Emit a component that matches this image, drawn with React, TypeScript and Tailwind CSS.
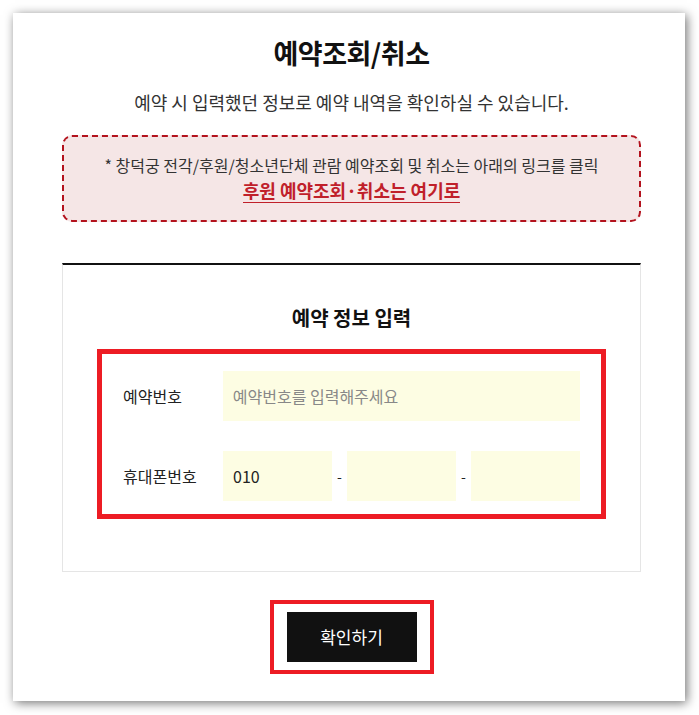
const font = { fontFamily: '"Noto Sans CJK KR", "Noto Sans", sans-serif' };

export default function App() {
  return (
    <div className="min-h-[715px] bg-white pt-[13px] pl-[13px]" style={font}>
      <div className="flex h-[688px] w-[672px] flex-col bg-white pl-[49px] pr-[44px] shadow-[2px_2px_10px_rgba(0,0,0,0.55)]">
        <h1 className="mt-[21px] text-center text-[27px] font-bold leading-[38px] tracking-[-0.5px] text-[#111]">
          예약조회/취소
        </h1>
        <p className="mt-[17px] text-center text-[18px] leading-[26px] text-[#333]">
          예약 시 입력했던 정보로 예약 내역을 확인하실 수 있습니다.
        </p>

        <div className="mt-[20px] flex h-[87px] flex-col items-center justify-center rounded-[10px] border-2 border-dashed border-[#b3121d] bg-[#f5e6e6]">
          <p className="text-[16px] leading-[22px] text-[#333]">
            * 창덕궁 전각/후원/청소년단체 관람 예약조회 및 취소는 아래의 링크를 클릭
          </p>
          <a className="mt-[2px] border-b border-[#c0202a] text-[18px] font-bold leading-[24px] text-[#c0202a]">
            후원 예약조회·취소는 여기로
          </a>
        </div>

        <div className="mt-[41px] border-t-2 border-[#111] border-x border-b border-x-[#e5e5e5] border-b-[#e5e5e5] pb-[52px]">
          <h2 className="mt-[39px] text-center text-[20px] font-bold leading-[28px] text-[#111]">
            예약 정보 입력
          </h2>
          <div className="mx-[34px] mt-[17px] border-[5px] border-[#ed1c24] px-[21px] pt-[17px] pb-[13px]">
            <div className="flex items-center">
              <span className="w-[100px] text-[16px] text-[#222]">예약번호</span>
              <div className="flex h-[50px] w-[358px] items-center bg-[#fdfde3] px-[10px] text-[16px] text-[#888]">
                예약번호를 입력해주세요
              </div>
            </div>
            <div className="mt-[30px] flex items-center">
              <span className="w-[100px] text-[16px] text-[#222]">휴대폰번호</span>
              <div className="flex h-[50px] w-[109px] items-center bg-[#fdfde3] px-[10px] text-[16px] text-[#222]">
                010
              </div>
              <span className="w-[15px] text-center text-[14px] text-[#222]">-</span>
              <div className="h-[50px] w-[109px] bg-[#fdfde3]" />
              <span className="w-[15px] text-center text-[14px] text-[#222]">-</span>
              <div className="h-[50px] w-[109px] bg-[#fdfde3]" />
            </div>
          </div>
        </div>

        <div className="mt-[28px] flex justify-center">
          <div className="border-4 border-[#ed1c24] px-[13px] py-[8px]">
            <button className="h-[50px] w-[130px] bg-[#111] text-[17px] text-white">
              확인하기
            </button>
          </div>
        </div>
      </div>
    </div>
  );
}
